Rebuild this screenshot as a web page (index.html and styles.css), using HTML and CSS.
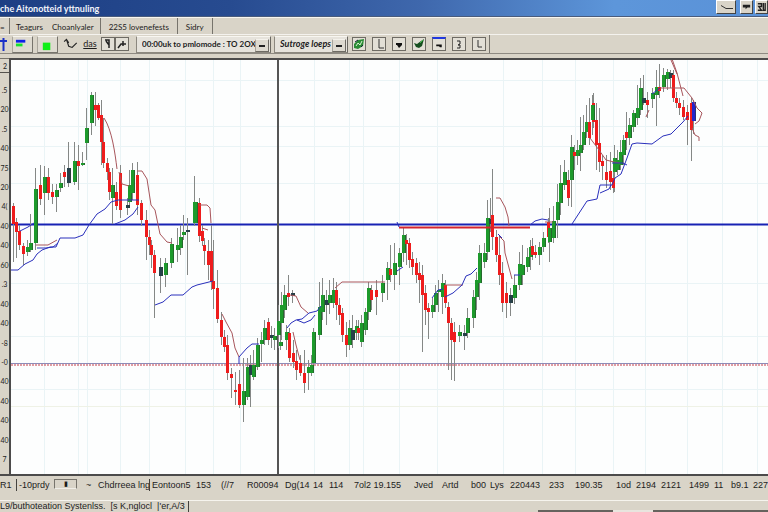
FILE: index.html
```html
<!DOCTYPE html>
<html lang="en">
<head>
<meta charset="utf-8">
<title>che Aitonotteid yttnuling</title>
<link rel="stylesheet" href="styles.css">
</head>
<body>
<div class="app">
  <header class="titlebar">
    <h1>che Aitonotteid yttnuling</h1>
    <div class="window-buttons">
      <button class="wide" aria-label="Minimize"><svg viewBox="0 0 18 11"><path d="M4 4l5 3h7" fill="none" stroke="#333"/></svg></button>
      <button aria-label="Maximize"><svg viewBox="0 0 12 11"><path d="M2 3h8v3H7l-2 2V6H2z" fill="#222"/></svg></button>
      <button aria-label="Close"><svg viewBox="0 0 12 11"><path d="M2 2h4v3H3l3 4H2M8 1v8h2V1" fill="none" stroke="#222" stroke-width="1.500"/></svg></button>
    </div>
  </header>

  <nav class="menubar">
    <a href="#" class="menu-mark">=</a>
    <div class="menu-group first"><a href="#">Teagurs</a><a href="#">Choanlyaler</a></div>
    <div class="menu-group"><a href="#">22S5 lovenefests</a></div>
    <div class="menu-group"><a href="#">Sidry</a></div>
  </nav>

  <div class="toolbar">
    <button class="flat pin" aria-label="Cursor"><svg viewBox="0 0 8 14"><path d="M0 4h7M3.500 1v13" fill="none" stroke="#1a30c8" stroke-width="2"/></svg></button>
    <button class="raised" aria-label="Levels"><svg viewBox="0 0 18 16"><path d="M2 3h10v3H2z" fill="#0c20e8"/><path d="M2 7h7v3H2z" fill="#18e030"/></svg></button>
    <button class="raised" aria-label="Color"><svg viewBox="0 0 18 16"><path d="M4 6h8v8H4z" fill="#10f018"/></svg></button>
    <button class="flat line-tool" aria-label="Line"><svg viewBox="0 0 14 14"><path d="M1 5l2-2 2 3M3 3l2 6 3 1 4-4" fill="none" stroke="#222"/></svg></button>
    <button class="flat word">das</button>
    <button class="box" aria-label="Text"><svg viewBox="0 0 12 12"><path d="M3 2h4v8M4 3l3 4" fill="none" stroke="#222" stroke-width="1.500"/></svg></button>
    <button class="box" aria-label="Arrow"><svg viewBox="0 0 12 12"><path d="M2 10l3-4h5M7 3v5" fill="none" stroke="#222" stroke-width="1.500"/></svg></button>
    <label class="combo period"><select aria-label="Period"><option>00:00uk to pmlomode : TO 2OX</option></select></label>
    <label class="combo style"><select aria-label="Style"><option>Sutroge loeps</option></select></label>
    <div class="tools">
      <button class="box" aria-label="Refresh"><svg viewBox="0 0 12 12"><path d="M1 6l4-4 6-1-1 7-5 3-4-1z" fill="#2a8c35"/><path d="M3 8l2-3 2 2 2-4" fill="none" stroke="#d6f0d0"/><path d="M2 4l3-2M8 9l2-2" stroke="#123"/></svg></button>
      <button class="box" aria-label="Corner"><svg viewBox="0 0 12 12"><path d="M6 1v9h5" fill="none" stroke="#333"/></svg></button>
      <button class="box" aria-label="Drop"><svg viewBox="0 0 12 12"><path d="M3 5h6v2L6 10 4 7H3z" fill="#111"/></svg></button>
      <button class="box" aria-label="Draw"><svg viewBox="0 0 12 12"><path d="M1 5l3 1 4-3 3-2-2 7-3 2-3-1z" fill="#164f20"/><path d="M7 5l3-3" stroke="#3dbb47"/></svg></button>
      <button class="box active" aria-label="Drop more"><svg viewBox="0 0 12 12"><path d="M3 6h6v3H7L6 8H3z" fill="#111"/></svg></button>
      <button class="box" aria-label="One"><svg viewBox="0 0 12 12"><path d="M4 3h3v3L5 7h2v3H4" fill="none" stroke="#222"/></svg></button>
      <button class="box" aria-label="Last"><svg viewBox="0 0 12 12"><path d="M5 2v7h4" fill="none" stroke="#333"/></svg></button>
    </div>
  </div>

  <main class="workspace">
    <div class="axis">
      <div class="axis-top">2</div>
      <div class="axis-labels">
        <span>.5</span><span>20</span><span>.5</span><span>40</span><span>75</span><span>20</span><span>4(</span><span>40</span><span>40</span><span>60</span><span>.3</span><span>40</span><span>40</span><span>-8</span><span>-0</span><span>40</span><span>40</span><span>40</span><span>40</span><span>7</span>
      </div>
    </div>
    <svg class="chart" viewBox="11 60 757 414" preserveAspectRatio="none" role="img" aria-label="Price chart">
      <path class="grid" d="M44.500 60V474M78.500 60V474M87.500 60V474M120.500 60V474M149.500 60V474M185.500 60V474M213.500 60V474M240.500 60V474M314.500 60V474M349.500 60V474M363.500 60V474M399.500 60V474M437.500 60V474M503.500 60V474M542.500 60V474M575.500 60V474M613.500 60V474M645.500 60V474M687.500 60V474M722.500 60V474M757.500 60V474"/>
      <path class="grid" d="M11 80.500H768M11 126.500H768M11 146.500H768M11 183.500H768M11 283.500H768M11 336.500H768M11 389.500H768"/>
      <path class="grid warm" d="M11 406.500H768"/>
      <path class="level-shadow" d="M11 363.500H768"/>
      <path class="level-dots" d="M11 365H768"/>
      <path class="level" d="M11 224.500H768"/>
      <path class="cursor" d="M278 60V474"/>
      <g id="candles"></g>
      <path class="upper" d="M104 118C112 130 115 153 117 169M119 172l3 12 7 2M137 171l5 0 5 8 4 26 4 5 5 24 7 8 5 1M199 205h8l3 3 1 15M202 228l6 2M36 245l12 0 9-5M222 314l4 8 6 11 3 15 4 9M290 295l6 1 5 11 7 6M293 332l3 13 4 15M335 288l7-6h43M445 285h18M496 198l4 0 5 9 3 10 1 9M499 236l5 5 1 12 7 26M545 222l8 0M590 138l9 12 7 10 8 2 6 1M666 57l5-1 6 17 6 23M660 88h24l8 10 5 10 5 5-3 8-4 3M692 128l3 7 4 2v4M646 117l3-7M671 60l6 14"/>
      <path class="upper strong" d="M399 227.500H530"/>
      <path class="lower" d="M11 270h7l7-6 8-4 4-6 5-4 8-3h6l4-9h15l8-3 6-10 8-11 8-5 6-7 7-2h21M20 231l8-4 6-4M37 248l9 0 7-1 5-4M115 224l10-4 8-6 5-7M155 305l8-3 8-7h12l9-8 5-2 16-4M239 357l8-9 5-4h7M239 357v7M287 328l4-5 5-3 6-1 7-6 8-2 4-5M297 320l7 3 7-3 4-5M399 227l-2-5M397 271l6-4M432 298l6-8 5-1M445 297l8-4 9-8 4-9 5-2 6-6M498 234l4 4M514 275h6M530 225l5-4 7-2 6 1M572 224l15-23 10-2 3-14h12l3-7 6-4 6-16 5-14 5-1 15 1 11-8 8-2 12-12 5-6M600 193l9-4 2-4M612 163h11l4 2M652 94l8-6"/>
    </svg>
  </main>

  <footer class="status">
    <span>R1</span><span class="sep">-10prdy</span><span class="inset">▮</span><span>~</span><span>Chdrreea lng</span><span class="sep">Eontoon5</span><span>153</span><span>(//7</span><span>R00094</span><span>Dg(14</span><span>14</span><span>114</span><span>7ol2 19.155</span><span>Jved</span><span>Artd</span><span>b00</span><span>Lys</span><span>220443</span><span>233</span><span>190.35</span><span>1od</span><span>2194</span><span>2121</span><span>1499</span><span>11</span><span>b9.1</span><span>227</span>
  </footer>
  <div class="tabs">
    <a href="#">L9/buthoteation Systenlss.</a><a href="#">[s K,nglocl</a><a href="#">|'er,A/3</a>
    <div class="tab-edge"></div>
  </div>
</div>
<script src="chart.js"></script>
</body>
</html>
```
FILE: styles.css
```css
* { box-sizing: border-box; }

body {
  margin: 0;
  background: #d9d4c8;
  color: #1c1c1c;
  font-family: Lato, "Liberation Sans", sans-serif;
  font-size: 9px;
  line-height: 12px;
}

a { color: inherit; text-decoration: none; white-space: nowrap; }

button, select { font: inherit; color: inherit; border-radius: 0; margin: 0; padding: 0; }

button svg { display: block; width: 100%; height: 100%; }

.app {
  display: flex;
  flex-direction: column;
  height: 100vh;
  overflow: hidden;
}

.titlebar {
  flex: 0 0 17px;
  display: flex;
  justify-content: space-between;
  overflow: hidden;
  background: linear-gradient(90deg, #1d3f84 0%, #274b90 30%, #3f68ad 55%, #5d96da 80%, #5a92d8 100%);
  border-bottom: 1px solid #4a5c7c;
}

.titlebar h1 {
  margin: 0;
  padding-top: 3px;
  font-size: 9px;
  line-height: 12px;
  font-weight: bold;
  color: #f2f4fa;
}

.window-buttons { display: flex; gap: 2px; }

.window-buttons button {
  width: 13px;
  height: 14px;
  border: 1px solid;
  border-color: #fff #444 #444 #fff;
  background: #d9d4c8;
}

.window-buttons .wide { width: 20px; margin-right: 2px; }

.menubar {
  flex: 0 0 18px;
  display: flex;
  align-items: stretch;
  border-top: 1px solid #f8f6f0;
  border-bottom: 1px solid #f4f2ee;
  font-size: 8px;
}

.menubar a { padding-top: 3px; }

.menu-mark { width: 10px; border-right: 1px solid #77746c; }

.menu-group {
  display: flex;
  gap: 9px;
  padding: 0 8px;
  border-right: 1px solid #77746c;
}

.menu-group.first { padding: 0 6px; }

.toolbar {
  flex: 0 0 19px;
  display: flex;
  align-items: center;
  border-bottom: 1px solid #8e8a82;
}

.toolbar > * { flex-shrink: 0; }

.flat { border: 0; background: none; height: 16px; }

.pin { width: 8px; margin-right: 4px; }

.raised {
  width: 21px;
  height: 17px;
  margin-right: 4px;
  border: 1px solid;
  border-color: #f6f4ee #77746c #77746c #aaa69c;
  background: #dedad0;
}

.line-tool { width: 16px; margin: 0 3px 0 1px; }

.word { width: 16px; margin-right: 3px; text-decoration: underline; }

.box {
  width: 14px;
  height: 14px;
  border: 1px solid #6e6b64;
  background: #e2dfd6;
}

.combo {
  display: flex;
  position: relative;
  height: 17px;
  border: 1px solid;
  border-color: #f8f6f0 #6c6962 #8c887f #8c887f;
  background: #e6e3dc;
}

.combo select {
  width: 100%;
  padding-left: 5px;
  border: 0;
  background: none;
  font-size: 8px;
  font-weight: bold;
  appearance: none;
}

.combo::after {
  content: "";
  position: absolute;
  right: 1px;
  top: 2px;
  width: 12px;
  height: 11px;
  border: 1px solid;
  border-color: #f4f2ec #6e6b64 #6e6b64 #a8a59c;
  background: linear-gradient(#222, #222) center 5px / 6px 2px no-repeat #dedad0;
}

.period { width: 135px; margin: 0 3px 0 7px; }

.style { width: 74px; }

.combo.style select { font-size: 9px; font-style: italic; }

.tools {
  display: flex;
  gap: 6px;
  height: 18px;
  align-items: center;
  padding: 0 3px 0 4px;
  border-right: 1px solid #77746c;
}

.active { border-top: 2px solid #2038e0; }

.workspace {
  flex: 1 1 auto;
  min-height: 0;
  display: grid;
  grid-template-columns: 9px 1fr;
  margin-top: 4px;
}

.axis {
  display: flex;
  flex-direction: column;
  border-top: 1px solid #77746c;
  font-size: 7px;
  line-height: 8px;
}

.axis-top {
  flex: 0 0 14px;
  padding: 3px 2px 0 0;
  border-bottom: 1px solid #55534e;
  text-align: right;
}

.axis-labels {
  flex: 1;
  display: grid;
  grid-auto-rows: 1fr;
  grid-template-columns: minmax(0, 1fr);
  padding: 7px 0 5px;
}

.axis-labels span {
  display: flex;
  align-items: center;
  justify-content: center;
}

.chart {
  display: block;
  width: 100%;
  height: 100%;
  min-height: 0;
  border-left: 2px solid #4c4b4b;
  border-top: 2px solid #4c4b4b;
  background: #fdfefe;
}

.chart path { fill: none; }
.chart .grid { stroke: #eaf4f6; }
.chart .warm { stroke: #eff2e6; }
.chart .level { stroke: #1822b4; stroke-width: 2; }
.chart .level-shadow { stroke: #8d8cb8; }
.chart .level-dots { stroke: #c43c48; stroke-dasharray: 2 1; }
.chart .cursor { stroke: #555; stroke-width: 2; }
.chart .upper { stroke: #a8565c; }
.chart .strong { stroke: #d42430; stroke-width: 2; }
.chart .lower { stroke: #2a30bc; }
.chart .wick { stroke: #858886; }
.chart .up { fill: #1d9a2c; }
.chart .down { fill: #ee1c1c; }
.chart .mixed { fill: #26404a; }
.chart .last { fill: #2424cc; }
.chart .edge { stroke: #2b3a2c; stroke-opacity: 0.5; }

.status {
  flex: 0 0 27px;
  display: grid;
  grid-template-columns:
    16px 38px 32px 12px 51px 47px 25px 26px 38px 28px 16px 25px 60px 28px
    29px 19px 20px 39px 26px 41px 20px 25px 28px 25px 17px 22px 1fr;
  padding-top: 3px;
  border-top: 2px solid #4c4b4b;
  border-bottom: 1px solid #f6f4ee;
  font-family: "Liberation Sans", sans-serif;
  white-space: nowrap;
}

.status .sep { height: 12px; padding-left: 2px; border-left: 1px solid #44423e; }

.inset {
  width: 23px;
  height: 10px;
  border: 1px solid #77746c;
  border-bottom-color: #f0eee8;
  font-size: 7px;
  line-height: 7px;
  text-align: center;
}

.tabs {
  flex: 0 0 11px;
  display: flex;
  gap: 5px;
  overflow: hidden;
  font-family: "Liberation Sans", sans-serif;
  line-height: 11px;
}

.tabs a:last-of-type { padding-right: 3px; border-right: 1px solid #44423e; }

.tab-edge {
  flex: 1;
  align-self: flex-end;
  height: 2px;
  background: linear-gradient(90deg, transparent 60%, #66635e 60%, #66635e 73%, #e8e5de 73%, #e8e5de 80%, #66635e 80%);
}
```
FILE: chart.js
```js
// Each candle: kind, x, body top, body bottom, wick top, wick bottom.
const candles = `
d 13 206 224 203 262|d 16 222 232 218 258|d 19 231 245 225 250|d 23 246 254 243 265|u 27 247 252 240 256|u 30 243 250 214 252|u 35 189 243 168 250
d 40 185 199 165 205|u 44 177 193 166 215|d 48 177 193 168 200|d 52 192 197 184 204|u 56 190 197 184 212|u 60 183 188 173 192|d 64 172 177 165 187|m 68 168 183 142 187|u 74 161 182 142 185|d 78 161 166 145 190|u 82 163 165 152 166
u 86 128 143 108 160|u 91 95 123 92 135|d 95 105 110 92 126|d 98 105 118 103 120|d 101 115 142 100 165|d 103 142 163 118 168|d 107 163 172 158 180|d 109 172 192 168 200|u 112 185 198 168 224|d 116 192 206 182 210|d 120 173 210 165 218|m 127 205 208 198 215|u 129 185 202 170 205|u 132 170 193 163 200|d 137 175 205 162 215
d 141 203 220 200 226|d 146 220 237 210 260|d 149 237 245 230 255|d 151 245 255 240 268|d 154 255 273 250 318|m 160 267 276 258 293|u 165 263 275 258 287|u 171 244 263 238 268|u 177 245 250 228 262|u 180 237 248 225 255|u 183 232 235 215 240|m 187 230 232 218 275|U 194 202 223 176 226|d 199 203 236 198 242|d 202 231 241 225 246|d 204 245 251 238 265|d 208 251 265 240 280|d 211 251 282 225 290|d 213 281 289 240 309
d 217 288 319 270 323|d 221 320 337 312 345|d 224 337 347 330 352|d 227 345 373 335 380|d 231 374 378 368 398|d 235 390 392 372 405|d 239 384 405 370 408|u 243 391 405 358 422|u 247 367 397 358 400|m 250 365 375 355 407|u 253 365 377 350 380|u 257 345 367 338 370|u 261 340 344 332 362|u 264 328 340 320 345|d 268 322 340 318 345|m 271 335 338 326 348|u 274 336 340 328 350|u 278 321 335 305 348|u 281 305 323 292 340|u 284 295 310 285 318|d 288 293 297 275 306|m 292 293 296 290 303
u 280 342 346 335 350|u 286 332 340 325 350|d 289 333 358 328 362|d 293 353 362 340 368|d 296 361 370 350 380|d 300 363 373 355 376|d 304 373 383 350 393|u 308 367 373 360 390|u 311 365 373 355 376|u 313 332 363 328 370|u 319 307 335 282 340|u 322 295 312 278 320|m 326 300 305 290 325|u 329 295 303 280 314|u 333 290 303 278 308|d 336 290 305 282 320|d 339 305 315 298 325|d 342 313 335 308 342|d 346 335 345 322 357|u 349 328 345 320 350|m 352 330 340 315 348|u 356 326 333 320 340|d 358 328 333 320 340|u 361 323 342 315 347|u 365 312 330 308 335|u 368 288 312 282 320|d 371 290 300 285 310|d 376 290 297 280 315
u 382 283 293 275 302|u 387 268 280 262 300|d 390 269 275 245 282|u 394 263 275 243 290|u 399 253 267 248 285|u 403 235 253 228 262|d 406 240 244 234 265|d 409 243 260 238 268|d 412 259 267 252 275|d 416 263 275 258 283|d 419 273 280 262 303|d 422 275 295 265 352|d 425 293 310 285 325|d 428 308 312 303 339|u 432 305 312 298 318|u 435 293 305 285 312|u 438 290 292 280 312|u 442 283 297 274 314|d 445 285 303 280 308|d 448 307 323 302 370|d 451 323 340 318 380|d 454 332 342 322 381
u 459 332 336 325 342|m 464 333 336 325 350|u 467 318 333 308 338|u 473 297 318 290 328|u 476 280 297 272 310|u 479 253 283 245 300|u 484 253 262 243 268|u 487 218 252 200 260|m 490 219 224 198 232|d 492 215 237 169 250|d 496 237 255 230 262|d 499 255 275 235 285|d 502 273 303 262 312|d 506 293 303 282 318|m 510 295 303 288 316|u 514 285 298 275 304|u 519 264 285 252 290|u 522 265 275 245 285|u 527 257 267 248 272|u 530 247 257 240 270|d 532 246 255 238 260|d 535 252 255 245 258|u 539 247 255 242 265|u 543 238 247 232 252|d 548 222 237 218 243|u 549 228 242 208 262|u 553 221 238 206 243
u 557 202 220 184 238|u 560 183 203 165 215|u 564 172 185 160 190|d 568 180 198 170 206|u 571 147 180 135 207|d 574 152 156 145 170|u 577 150 156 140 165|u 580 145 153 117 171|u 583 132 145 115 150|u 586 122 132 105 138|d 589 122 138 98 145|d 593 103 122 93 128|u 592 105 120 95 135|d 596 120 145 103 170|d 599 143 162 108 172|d 602 161 166 155 180|d 606 172 180 155 188|d 610 171 182 152 190|d 613 178 188 165 193|u 614 158 172 145 192|u 617 160 170 150 175|u 620 152 165 140 170|u 623 140 155 135 165|d 626 132 138 112 150
u 629 125 138 118 145|u 633 113 127 110 132|u 637 108 118 85 125|u 640 88 110 78 115|m 643 98 103 75 105|d 647 100 105 92 118|u 652 93 99 88 108|u 656 87 95 70 126|d 659 87 91 64 98|u 663 75 87 68 92|u 667 72 79 69 90|m 670 73 78 70 88|d 673 75 98 70 102|d 676 98 103 92 108|d 679 103 108 98 115|d 683 107 117 100 120|d 687 112 120 105 145|d 691 103 130 98 161|b 693 102 121 100 134`;

const kinds = { u: 'up', U: 'up', d: 'down', m: 'mixed', b: 'last' };
const ns = 'http://www.w3.org/2000/svg';
const layer = document.getElementById('candles');

function add(tag, attrs) {
  const node = document.createElementNS(ns, tag);
  for (const key in attrs) node.setAttribute(key, attrs[key]);
  layer.appendChild(node);
}

const rows = candles.trim().split(/[|\n]/).map((row) => row.split(' '));

for (const [, x, , , high, low] of rows) {
  add('path', { class: 'wick', d: `M${+x + 0.5} ${high}V${low}` });
}
for (const [kind, x, top, bottom] of rows) {
  const width = kind === 'U' ? 5 : kind === 'd' ? 3 : 4;
  add('rect', { class: kinds[kind], x: x - 1, y: top, width, height: bottom - top });
  if (kind !== 'd') {
    add('path', { class: 'edge', d: `M${+x + width - 1.5} ${top}V${bottom}` });
  }
}
```
